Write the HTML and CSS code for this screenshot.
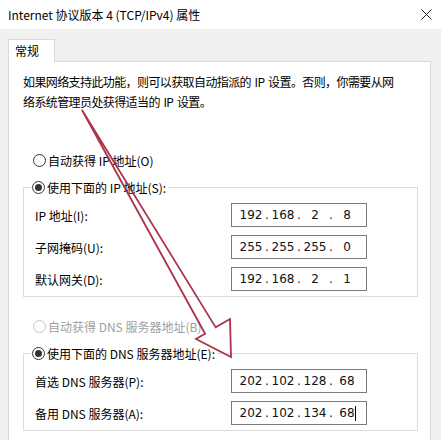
FILE: index.html
```html
<!DOCTYPE html>
<html lang="zh-CN">
<head>
<meta charset="utf-8">
<title>Internet 协议版本 4 (TCP/IPv4) 属性</title>
<link rel="stylesheet" href="styles.css">
</head>
<body>
<div class="window">
  <div class="titlebar">
    <span class="title">Internet 协议版本 4 (TCP/IPv4) 属性</span>
    <svg class="close" width="11" height="11" viewBox="0 0 11 11"><path d="M0.5 0.5 L10.5 10.5 M10.5 0.5 L0.5 10.5" stroke="#222" stroke-width="1" fill="none"/></svg>
  </div>
  <div class="content">
    <div class="tabs"><div class="tab">常规</div></div>
    <div class="panel">
      <p class="desc">如果网络支持此功能，则可以获取自动指派的 IP 设置。否则，你需要从网<br>络系统管理员处获得适当的 IP 设置。</p>

      <div class="option"><span class="radio"></span>自动获得 IP 地址(O)</div>
      <fieldset class="group">
        <legend class="legend"><span class="radio checked"></span>使用下面的 IP 地址(S):</legend>
        <div class="row"><span class="label">IP 地址(I):</span>
          <div class="ip"><span class="seg">192</span><span class="dot">.</span><span class="seg">168</span><span class="dot">.</span><span class="seg">2</span><span class="dot">.</span><span class="seg">8</span></div></div>
        <div class="row"><span class="label">子网掩码(U):</span>
          <div class="ip"><span class="seg">255</span><span class="dot">.</span><span class="seg">255</span><span class="dot">.</span><span class="seg">255</span><span class="dot">.</span><span class="seg">0</span></div></div>
        <div class="row"><span class="label">默认网关(D):</span>
          <div class="ip"><span class="seg">192</span><span class="dot">.</span><span class="seg">168</span><span class="dot">.</span><span class="seg">2</span><span class="dot">.</span><span class="seg">1</span></div></div>
      </fieldset>

      <div class="option disabled dns-auto"><span class="radio"></span>自动获得 DNS 服务器地址(B)</div>
      <fieldset class="group">
        <legend class="legend"><span class="radio checked"></span>使用下面的 DNS 服务器地址(E):</legend>
        <div class="row"><span class="label">首选 DNS 服务器(P):</span>
          <div class="ip"><span class="seg">202</span><span class="dot">.</span><span class="seg">102</span><span class="dot">.</span><span class="seg">128</span><span class="dot">.</span><span class="seg">68</span></div></div>
        <div class="row"><span class="label">备用 DNS 服务器(A):</span>
          <div class="ip"><span class="seg">202</span><span class="dot">.</span><span class="seg">102</span><span class="dot">.</span><span class="seg">134</span><span class="dot">.</span><span class="seg">68<span class="caret"></span></span></div></div>
      </fieldset>
    </div>
  </div>
</div>
<svg class="arrow" width="441" height="440" viewBox="0 0 441 440">
  <polygon points="82,110 205.1,333.7 196,339 231,357 230,319 215.7,327.4" fill="none" stroke="#a3233c" stroke-width="1.8" stroke-linejoin="miter" opacity="0.92"/>
</svg>
</body>
</html>
```

FILE: styles.css
```css
* { box-sizing: border-box; }

html, body {
  margin: 0;
  padding: 0;
  width: 441px;
  height: 440px;
  overflow: hidden;
  background: #f0f0f0;
  font-family: "Noto Sans CJK SC", "Noto Sans", sans-serif;
  font-size: 12px;
  color: #000;
}

.window {
  width: 441px;
  height: 440px;
}

.titlebar {
  height: 29px;
  background: #fff;
  display: flex;
  align-items: center;
  justify-content: space-between;
  padding: 0 9px 0 8px;
}

.title {
  line-height: 29px;
  padding-bottom: 1px;
}

.close {
  display: block;
  margin-top: -1px;
}

.content {
  padding: 10px 10px 0 8px;
}

.tabs {
  display: flex;
  height: 22px;
  position: relative;
  z-index: 1;
}

.tab {
  width: 47px;
  height: 23px;
  background: #fff;
  border: 1px solid #d9d9d9;
  border-bottom: none;
  padding-left: 6px;
  line-height: 22px;
}

.panel {
  background: #fff;
  border: 1px solid #d9d9d9;
  padding: 0 12px 0 14px;
  height: 400px;
}

.desc {
  margin: 10px 0 0;
  line-height: 20px;
  white-space: nowrap;
  letter-spacing: -0.6px;
  word-spacing: 1.5px;
}

.option {
  display: flex;
  align-items: center;
  height: 20px;
  margin-top: 38px;
  padding-left: 10px;
}

.option.dns-auto {
  margin-top: 19px;
}

.option.disabled {
  color: #a0a0a0;
}

.radio {
  display: inline-block;
  width: 13px;
  height: 13px;
  border: 1px solid #333;
  border-radius: 50%;
  margin-right: 2px;
  position: relative;
  flex: none;
  background: #fff;
}

.disabled .radio {
  border-color: #c6c6c6;
}

.radio.checked::after {
  content: "";
  position: absolute;
  left: 2px;
  top: 2px;
  width: 7px;
  height: 7px;
  border-radius: 50%;
  background: #333;
}

.group {
  margin: 7px 0 0;
  padding: 0 0 5px 11px;
  border: 1px solid #dcdcdc;
  min-inline-size: 0;
}

.legend {
  display: flex;
  align-items: center;
  height: 20px;
  padding: 0 2px 0 1px;
  margin-left: -4px;
}

.row {
  display: flex;
  align-items: center;
  justify-content: space-between;
  height: 24px;
  margin-top: 8px;
  padding-right: 50px;
}

.legend + .row {
  margin-top: 6px;
}

.ip {
  display: flex;
  align-items: center;
  width: 136px;
  height: 24px;
  border: 1px solid #7a7a7a;
  background: #fff;
  padding-left: 7px;
  font-family: "DejaVu Sans", sans-serif;
  font-size: 12px;
  color: #111;
}

.seg {
  width: 24px;
  text-align: center;
  position: relative;
}

.dot {
  width: 8px;
  text-align: center;
}

.caret {
  position: absolute;
  right: 3px;
  top: 0;
  width: 1px;
  height: 15px;
  background: #000;
}

.arrow {
  position: absolute;
  left: 0;
  top: 0;
  pointer-events: none;
}
```
